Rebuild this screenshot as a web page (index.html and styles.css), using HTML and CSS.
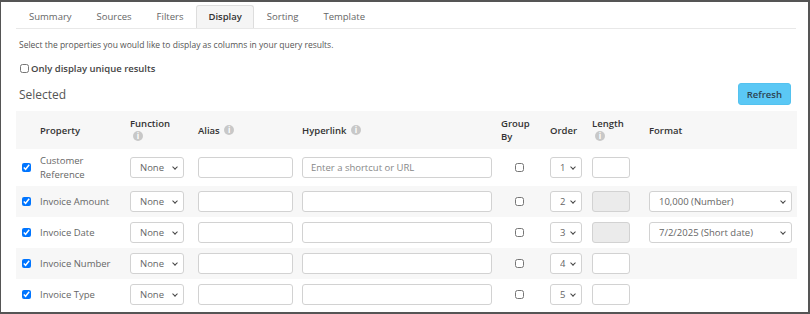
FILE: index.html
```html
<!DOCTYPE html>
<html lang="en">
<head>
    <meta charset="UTF-8">
    <title>Query Display</title>
    <link rel="stylesheet" href="styles.css">
</head>
<body>
    <div class="frame">
        <!-- Tabs -->
        <ul class="tabs">
            <li class="tab">Summary</li>
            <li class="tab">Sources</li>
            <li class="tab">Filters</li>
            <li class="tab active">Display</li>
            <li class="tab">Sorting</li>
            <li class="tab">Template</li>
        </ul>

        <p class="intro">Select the properties you would like to display as columns in your query results.</p>

        <label class="unique"><input type="checkbox"> Only display unique results</label>

        <div class="section-head">
            <h2>Selected</h2>
            <button class="btn">Refresh</button>
        </div>

        <table class="props">
            <colgroup>
                <col style="width:20px">
                <col style="width:90px">
                <col style="width:68px">
                <col style="width:104px">
                <col style="width:199px">
                <col style="width:49px">
                <col style="width:42px">
                <col style="width:57px">
                <col style="width:152px">
            </colgroup>
            <thead>
                <tr>
                    <th></th>
                    <th>Property</th>
                    <th>Function<br><span class="info">i</span></th>
                    <th>Alias <span class="info">i</span></th>
                    <th>Hyperlink <span class="info">i</span></th>
                    <th>Group<br>By</th>
                    <th>Order</th>
                    <th>Length<br><span class="info">i</span></th>
                    <th>Format</th>
                </tr>
            </thead>
            <tbody>
                <tr class="tall">
                    <td><input type="checkbox" checked></td>
                    <td>Customer<br>Reference</td>
                    <td><span class="sel"><select class="fn"><option>None</option></select></span></td>
                    <td><input class="txt alias" type="text"></td>
                    <td><input class="txt link" type="text" placeholder="Enter a shortcut or URL"></td>
                    <td class="center"><input type="checkbox"></td>
                    <td><span class="sel"><select class="ord"><option>1</option></select></span></td>
                    <td><input class="txt len" type="text"></td>
                    <td></td>
                </tr>
                <tr>
                    <td><input type="checkbox" checked></td>
                    <td>Invoice Amount</td>
                    <td><span class="sel"><select class="fn"><option>None</option></select></span></td>
                    <td><input class="txt alias" type="text"></td>
                    <td><input class="txt link" type="text"></td>
                    <td class="center"><input type="checkbox"></td>
                    <td><span class="sel"><select class="ord"><option>2</option></select></span></td>
                    <td><input class="txt len" type="text" disabled></td>
                    <td><span class="sel"><select class="fmt"><option>10,000 (Number)</option></select></span></td>
                </tr>
                <tr>
                    <td><input type="checkbox" checked></td>
                    <td>Invoice Date</td>
                    <td><span class="sel"><select class="fn"><option>None</option></select></span></td>
                    <td><input class="txt alias" type="text"></td>
                    <td><input class="txt link" type="text"></td>
                    <td class="center"><input type="checkbox"></td>
                    <td><span class="sel"><select class="ord"><option>3</option></select></span></td>
                    <td><input class="txt len" type="text" disabled></td>
                    <td><span class="sel"><select class="fmt"><option>7/2/2025 (Short date)</option></select></span></td>
                </tr>
                <tr>
                    <td><input type="checkbox" checked></td>
                    <td>Invoice Number</td>
                    <td><span class="sel"><select class="fn"><option>None</option></select></span></td>
                    <td><input class="txt alias" type="text"></td>
                    <td><input class="txt link" type="text"></td>
                    <td class="center"><input type="checkbox"></td>
                    <td><span class="sel"><select class="ord"><option>4</option></select></span></td>
                    <td><input class="txt len" type="text"></td>
                    <td></td>
                </tr>
                <tr>
                    <td><input type="checkbox" checked></td>
                    <td>Invoice Type</td>
                    <td><span class="sel"><select class="fn"><option>None</option></select></span></td>
                    <td><input class="txt alias" type="text"></td>
                    <td><input class="txt link" type="text"></td>
                    <td class="center"><input type="checkbox"></td>
                    <td><span class="sel"><select class="ord"><option>5</option></select></span></td>
                    <td><input class="txt len" type="text"></td>
                    <td></td>
                </tr>
            </tbody>
        </table>
    </div>
</body>
</html>
```

FILE: styles.css
```css
* {
    box-sizing: border-box;
}

body {
    margin: 0;
    font-family: 'Open Sans', 'Noto Sans', sans-serif;
    color: #555;
    background: #fff;
}

.frame {
    width: 810px;
    height: 314px;
    border: 2px solid #555;
    border-left-width: 1px;
    padding: 0 12px 0 15px;
    overflow: hidden;
}

.tabs {
    display: flex;
    gap: 1px;
    margin: 3px 0 0;
    padding: 0;
    list-style: none;
    border-bottom: 1px solid #e8e8e8;
}

.tab {
    height: 23px;
    line-height: 22px;
    padding: 0 11px;
    font-size: 9.5px;
    color: #666;
    border: 1px solid transparent;
    border-bottom: none;
    border-radius: 3px 3px 0 0;
}

.tab:first-child {
    margin-left: 1px;
}

.tab.active {
    background: #f5f5f5;
    border-color: #ddd;
    color: #333;
    font-weight: 600;
}

.intro {
    margin: 9px 0 0 3px;
    font-size: 8.5px;
    line-height: 14px;
    color: #555;
}

.unique {
    display: flex;
    align-items: center;
    margin: 10px 0 0 3px;
    font-size: 9.5px;
    font-weight: 600;
    color: #444;
}

.unique input {
    width: 9px;
    height: 9px;
    margin: 0 2px 0 1px;
}

.section-head {
    display: flex;
    justify-content: space-between;
    align-items: center;
    margin: 8px 5px 0 3px;
}

.section-head h2 {
    margin: 0;
    font-size: 12px;
    font-weight: 400;
    color: #555;
}

.btn {
    height: 22px;
    padding: 0 8px;
    background: #5bc8f5;
    border: 1px solid #54c2ef;
    border-radius: 3px;
    font-family: inherit;
    font-size: 9.5px;
    font-weight: 600;
    color: #2d4452;
}

.props {
    width: 781px;
    margin-top: 6px;
    border-collapse: collapse;
    table-layout: fixed;
    font-size: 9.5px;
}

.props th,
.props td {
    padding: 0 0 0 4px;
    text-align: left;
    vertical-align: middle;
}

.props th {
    height: 38px;
    font-weight: 600;
    color: #333;
    line-height: 13px;
    background: #f7f7f7;
}

.props td {
    height: 31px;
    color: #666;
    line-height: 14px;
}

.props tr.tall td {
    height: 37px;
}

.props tbody tr:nth-child(even) td {
    background: #f7f7f7;
}

.props td.center {
    text-align: center;
    padding-left: 0;
}

.props td input[type=checkbox] {
    width: 9px;
    height: 9px;
    margin: 0 0 0 2px;
    vertical-align: middle;
}

.props td.center input[type=checkbox] {
    margin: 0 4px 0 0;
}

.info {
    display: inline-block;
    width: 10px;
    height: 10px;
    border-radius: 50%;
    background: #c8c8c8;
    color: #fff;
    font-size: 8px;
    font-weight: 700;
    line-height: 10px;
    text-align: center;
    vertical-align: 1px;
    margin-left: 2px;
}

th br + .info {
    margin-left: 3px;
}

.txt,
select {
    height: 21px;
    border: 1px solid #d2d2d2;
    border-radius: 3px;
    background: #fff;
    font-family: inherit;
    font-size: 9.5px;
    color: #666;
    padding: 0 8px;
    vertical-align: middle;
}

select {
    appearance: none;
    -webkit-appearance: none;
    padding: 0 14px 0 9px;
}

.sel {
    position: relative;
    display: inline-block;
    vertical-align: middle;
}

.sel select {
    vertical-align: top;
}

.sel::after {
    content: '';
    position: absolute;
    right: 7px;
    top: 8px;
    width: 3px;
    height: 3px;
    border-right: 1.3px solid #444;
    border-bottom: 1.3px solid #444;
    transform: rotate(45deg);
    pointer-events: none;
}

.txt::placeholder {
    color: #888;
}

.txt:disabled {
    background: #ebebeb;
}

.fn {
    width: 54px;
}

.alias {
    width: 95px;
}

.link {
    width: 190px;
}

.ord {
    width: 32px;
}

.len {
    width: 38px;
}

.fmt {
    width: 143px;
}
```
